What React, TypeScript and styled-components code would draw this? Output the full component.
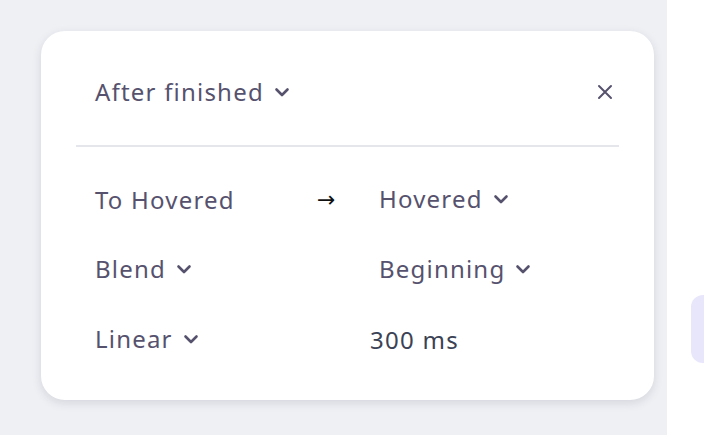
import React from "react";
import styled, { createGlobalStyle } from "styled-components";

const GlobalStyle = createGlobalStyle`
  html, body {
    margin: 0;
    padding: 0;
    background: #ffffff;
  }
  body {
    font-family: "Noto Sans", "Open Sans", sans-serif;
  }
`;

const Page = styled.div`
  display: flex;
  width: 704px;
  height: 435px;
  overflow: hidden;
`;

const Canvas = styled.div`
  flex: 0 0 667px;
  height: 100%;
  background: #eff0f4;
  padding: 31px 0 0 41px;
  box-sizing: border-box;
`;

const SidePanel = styled.div`
  flex: 1;
  min-width: 0;
  padding: 295px 0 0 24px;
`;

const Chip = styled.div`
  height: 68px;
  border-radius: 12px 0 0 12px;
  background: #e8e6fb;
`;

const Card = styled.div`
  width: 613px;
  height: 369px;
  box-sizing: border-box;
  background: #ffffff;
  border-radius: 24px;
  box-shadow: 0 3px 10px rgba(40, 40, 70, 0.13);
  padding: 35px 35px 25px;
`;

const Header = styled.div`
  display: flex;
  align-items: center;
  justify-content: space-between;
  height: 52px;
  padding: 0 0 0 19px;
  margin-bottom: 27px;
`;

const Divider = styled.div`
  height: 2px;
  background: #e5e5ec;
`;

const Rows = styled.div`
  display: grid;
  grid-template-columns: 222px 62px 1fr;
  grid-auto-rows: 70px;
  align-items: center;
  padding: 17px 0 0 19px;
`;

const Select = styled.div`
  display: flex;
  align-items: center;
  gap: 10px;
  font-size: 24px;
  letter-spacing: 1.2px;
  color: #56526e;
  line-height: 1;
`;

const Label = styled.span`
  font-size: 24px;
  letter-spacing: 1.2px;
  color: #56526e;
`;

const Arrow = styled.span`
  font-family: "DejaVu Sans", sans-serif;
  font-size: 22px;
  color: #111111;
`;

const Duration = styled.span<{ $shift: number }>`
  font-size: 24px;
  letter-spacing: 1.3px;
  color: #3b4254;
  margin-left: ${(p) => p.$shift}px;
`;

const CloseButton = styled.button`
  width: 30px;
  height: 30px;
  border: none;
  background: transparent;
  padding: 0;
  margin-right: -1px;
  display: flex;
  align-items: center;
  justify-content: center;
  color: #56526e;
`;

const Chevron = () => (
  <svg width="16" height="16" viewBox="0 0 16 16" fill="none">
    <polyline
      points="2.5,5.5 8,11 13.5,5.5"
      stroke="#56526e"
      strokeWidth="2.6"
      strokeLinecap="round"
      strokeLinejoin="round"
    />
  </svg>
);

const CloseIcon = () => (
  <svg width="16" height="16" viewBox="0 0 16 16" fill="none">
    <path
      d="M2 2 L14 14 M14 2 L2 14"
      stroke="currentColor"
      strokeWidth="2"
      strokeLinecap="round"
    />
  </svg>
);

const Dropdown = ({ value }: { value: string }) => (
  <Select>
    <span>{value}</span>
    <Chevron />
  </Select>
);

export default function App() {
  return (
    <Page>
      <GlobalStyle />
      <Canvas>
        <Card>
          <Header>
            <Dropdown value="After finished" />
            <CloseButton aria-label="Close">
              <CloseIcon />
            </CloseButton>
          </Header>
          <Divider />
          <Rows>
            <Label>To Hovered</Label>
            <Arrow>→</Arrow>
            <Dropdown value="Hovered" />

            <Dropdown value="Blend" />
            <span />
            <Dropdown value="Beginning" />

            <Dropdown value="Linear" />
            <span />
            <Duration $shift={-9}>300 ms</Duration>
          </Rows>
        </Card>
      </Canvas>
      <SidePanel>
        <Chip />
      </SidePanel>
    </Page>
  );
}
